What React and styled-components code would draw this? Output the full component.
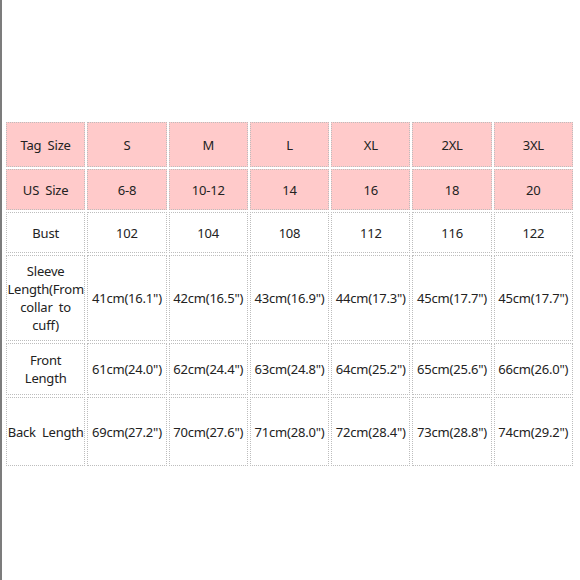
import React from 'react'
import styled, { createGlobalStyle } from 'styled-components'

const Global = createGlobalStyle`
    html, body {
        margin: 0;
        padding: 0;
        background: #fff;
    }
`

const Page = styled.div`
    width: 578px;
    height: 580px;
    border-left: 2px solid #7c7c7c;
    padding: 120px 0 0 2px;
    box-sizing: border-box;
    font-family: "Noto Sans", "Open Sans", sans-serif;
    color: #222;
`

const Table = styled.table`
    width: 571px;
    table-layout: fixed;
    border-collapse: separate;
    border-spacing: 2px;
`

const Cell = styled.td`
    box-sizing: border-box;
    height: ${props => props.$height}px;
    border: 1px dotted #bdbdbd;
    background: ${props => props.$head ? '#ffcaca' : '#fff'};
    text-align: center;
    vertical-align: middle;
    font-size: 13px;
    line-height: 18px;
    padding: 0;
    word-spacing: 3px;
    white-space: ${props => props.$label ? 'normal' : 'nowrap'};
    letter-spacing: -0.2px;
`

const rows = [
    { label: 'Tag Size', head: true, h: 45, cells: ['S', 'M', 'L', 'XL', '2XL', '3XL'] },
    { label: 'US Size', head: true, h: 41, cells: ['6-8', '10-12', '14', '16', '18', '20'] },
    { label: 'Bust', h: 41, cells: ['102', '104', '108', '112', '116', '122'] },
    {
        label: 'Sleeve Length(From collar to cuff)', h: 86,
        cells: ['41cm(16.1")', '42cm(16.5")', '43cm(16.9")', '44cm(17.3")', '45cm(17.7")', '45cm(17.7")'],
    },
    {
        label: 'Front Length', h: 52,
        cells: ['61cm(24.0")', '62cm(24.4")', '63cm(24.8")', '64cm(25.2")', '65cm(25.6")', '66cm(26.0")'],
    },
    {
        label: 'Back Length', h: 69,
        cells: ['69cm(27.2")', '70cm(27.6")', '71cm(28.0")', '72cm(28.4")', '73cm(28.8")', '74cm(29.2")'],
    },
]

const App = () => {
    return (
        <>
            <Global />
            <Page>
                <Table>
                    <tbody>
                        {rows.map(row => (
                            <tr key={row.label}>
                                <Cell $head={row.head} $height={row.h} $label>{row.label}</Cell>
                                {row.cells.map((c, i) => (
                                    <Cell key={i} $head={row.head} $height={row.h}>{c}</Cell>
                                ))}
                            </tr>
                        ))}
                    </tbody>
                </Table>
            </Page>
        </>
    )
}

export default App
